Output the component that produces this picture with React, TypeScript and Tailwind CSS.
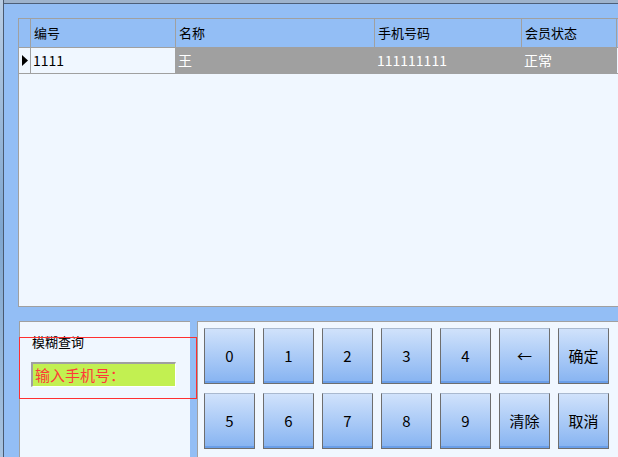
import React from 'react';

const font = { fontFamily: '"Noto Sans CJK SC", "Noto Sans", sans-serif' };

const columns = [
  { title: '编号', w: 'w-[145px]' },
  { title: '名称', w: 'w-[199px]' },
  { title: '手机号码', w: 'w-[147px]' },
  { title: '会员状态', w: 'w-[95px]' },
];

const row = ['1111', '王', '111111111', '正常'];

const keys = [
  ['0', '1', '2', '3', '4', '←', '确定'],
  ['5', '6', '7', '8', '9', '清除', '取消'],
];

const Key: React.FC<{ label: string }> = ({ label }) => (
  <button className="w-[51px] h-[56px] flex items-center justify-center text-[15px] text-black bg-gradient-to-b from-[#d0e2fb] to-[#86b3f1] border border-[#6e6e6e] border-t-[#a9b9cf] shadow-[inset_0_-2px_0_#6a9ee8]">
    {label}
  </button>
);

export default function App() {
  return (
    <div className="w-[618px] h-[457px] overflow-hidden flex bg-[#93bef5]" style={font}>
      {/* blurred desktop edge */}
      <div className="w-[3px] shrink-0 bg-gradient-to-b from-[#b9cde4] via-[#7fa6cf] to-[#a7c2df]" />
      <div className="w-px shrink-0 bg-[#4a5a70]" />
      <div className="flex-1 flex flex-col">
        <div className="h-[3px] bg-[#9eb3cc]" />
        <div className="h-px bg-[#4d5f78]" />
        {/* grid */}
        <div className="mt-[14px] ml-[14px] h-[289px] bg-[#f0f7ff] border-l border-t border-b border-[#a0a0a0] flex flex-col">
          <div className="flex h-[29px] bg-[#93bef5] border-b border-[#a0a0a0] text-[13px] text-black">
            <div className="w-[12px] shrink-0 border-r border-[#a0a0a0]" />
            {columns.map((c) => (
              <div key={c.title} className={`${c.w} shrink-0 border-r border-[#a0a0a0] pl-[3px] pt-[6px] leading-[16px]`}>
                {c.title}
              </div>
            ))}
          </div>
          <div className="flex h-[26px] border-b border-[#a0a0a0] text-[14px]">
            <div className="w-[12px] shrink-0 border-r border-[#a0a0a0] flex items-center justify-center">
              <svg width="6" height="11" viewBox="0 0 6 11"><path d="M0 0 L6 5.5 L0 11 Z" fill="#000" /></svg>
            </div>
            {columns.map((c, i) => (
              <div
                key={c.title}
                className={`${c.w} shrink-0 border-r border-[#a0a0a0] pl-[2px] flex items-center ${
                  i === 0 ? 'bg-[#f0f7ff] text-black' : 'bg-[#a0a0a0] text-white'
                }`}
              >
                {row[i]}
              </div>
            ))}
          </div>
        </div>
        {/* bottom panels */}
        <div className="mt-[14px] flex flex-1">
          <div className="ml-[15px] w-[171px] bg-[#f0f7ff] border-l border-t border-[#a0a0a0] relative">
            <div className="absolute left-[-1px] top-[15px] w-[178px] h-[62px] border border-[#ff3030]" />
            <div className="pl-[12px] pt-[12px] text-[13px] leading-[16px] text-black">模糊查询</div>
            <div className="ml-[11px] mt-[12px] w-[145px] h-[25px] bg-[#c2f051] border-l-2 border-t-2 border-[#a0a0a0] border-r border-b border-r-white border-b-white text-[15px] leading-[21px] pl-[2px] text-[#ff3838]">
              输入手机号：
            </div>
          </div>
          <div className="ml-[7px] flex-1 bg-[#f0f7ff] border-l border-t border-[#a0a0a0] pl-[6px] pt-[6px] flex flex-col gap-[9px]">
            {keys.map((r, ri) => (
              <div key={ri} className="flex gap-[8px]">
                {r.map((k) => (
                  <Key key={k} label={k} />
                ))}
              </div>
            ))}
          </div>
        </div>
      </div>
    </div>
  );
}
